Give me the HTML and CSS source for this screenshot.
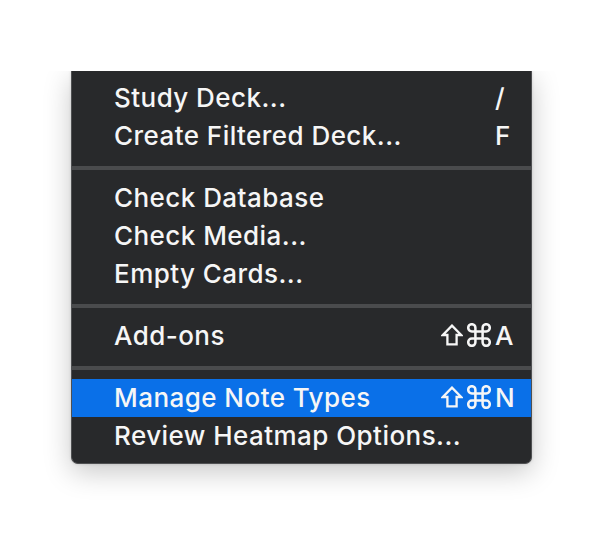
FILE: index.html
```html
<!DOCTYPE html>
<html>
<head>
<meta charset="utf-8">
<link rel="stylesheet" href="styles.css">
</head>
<body>
<div class="stage">
  <div class="menu">
    <div class="item"><span class="label">Study Deck...</span><span class="sc"><span class="mods"></span><span class="key">/</span></span></div>
    <div class="item"><span class="label">Create Filtered Deck...</span><span class="sc"><span class="mods"></span><span class="key">F</span></span></div>
    <div class="sep"></div>
    <div class="item"><span class="label">Check Database</span></div>
    <div class="item"><span class="label">Check Media...</span></div>
    <div class="item"><span class="label">Empty Cards...</span></div>
    <div class="sep"></div>
    <div class="item"><span class="label">Add-ons</span><span class="sc"><span class="mods">
      <svg class="shift" viewBox="0 0 22 22" width="22" height="22"><path d="M11 1.6 L1.8 11 H6.4 V20.4 H15.6 V11 H20.2 Z"/></svg>
      <svg class="cmd" viewBox="2 2 20 20" width="24" height="24"><path d="M15 6v12a3 3 0 1 0 3-3H6a3 3 0 1 0 3 3V6a3 3 0 1 0-3 3h12a3 3 0 1 0-3-3"/></svg>
    </span><span class="key">A</span></span></div>
    <div class="sep"></div>
    <div class="item active"><span class="label">Manage Note Types</span><span class="sc"><span class="mods">
      <svg class="shift" viewBox="0 0 22 22" width="22" height="22"><path d="M11 1.6 L1.8 11 H6.4 V20.4 H15.6 V11 H20.2 Z"/></svg>
      <svg class="cmd" viewBox="2 2 20 20" width="24" height="24"><path d="M15 6v12a3 3 0 1 0 3-3H6a3 3 0 1 0 3 3V6a3 3 0 1 0-3 3h12a3 3 0 1 0-3-3"/></svg>
    </span><span class="key">N</span></span></div>
    <div class="item"><span class="label">Review Heatmap Options...</span></div>
  </div>
</div>
</body>
</html>
```

FILE: styles.css
```css
html, body {
  margin: 0;
  padding: 0;
  background: #ffffff;
}
body {
  font-family: Inter, "Noto Sans", "Liberation Sans", sans-serif;
}
.stage {
  margin-top: 71px;
  padding: 0 0 60px 0;
  overflow: hidden;
  width: 604px;
}
.menu {
  margin-left: 71px;
  width: 461px;
  box-sizing: border-box;
  background: #28292b;
  border: 1px solid #4f5052;
  border-top: none;
  border-radius: 0 0 7px 7px;
  padding: 8px 0;
  box-shadow: 0 8px 28px rgba(0, 0, 0, 0.22), 0 0 3px rgba(0,0,0,0.15);
  color: #f6f6f6;
  font-size: 26px;
  font-weight: 500;
  letter-spacing: 0.45px;
}
.item {
  height: 38px;
  box-sizing: border-box;
  padding-bottom: 2px;
  display: flex;
  align-items: center;
  padding-left: 42px;
  padding-right: 18px;
}
.item.active {
  background: #0a70e8;
}
.label {
  flex: 1;
  white-space: nowrap;
}
.sc {
  display: flex;
  align-items: center;
}
.mods {
  display: flex;
  align-items: center;
  gap: 4px;
  margin-right: 4px;
}
.key {
  width: 18px;
}
.shift path {
  fill: none;
  stroke: #f6f6f6;
  stroke-width: 2.3;
  stroke-linejoin: miter;
}
.cmd path {
  fill: none;
  stroke: #f6f6f6;
  stroke-width: 2.1;
}
.sep {
  height: 4px;
  background: #4a4b4d;
  margin: 11px 0 9px;
}
```
